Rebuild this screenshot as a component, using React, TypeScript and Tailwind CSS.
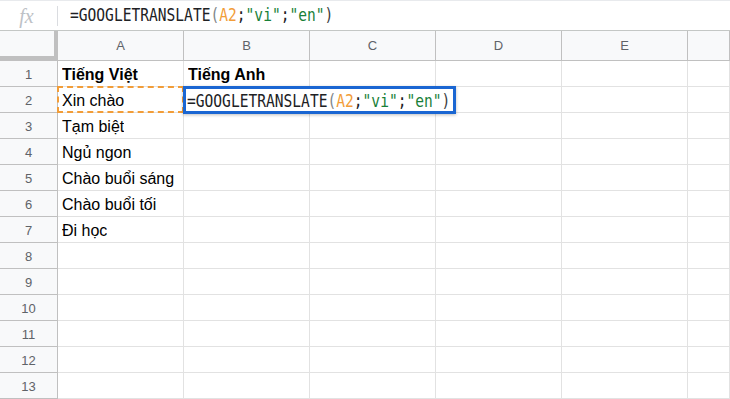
import React from 'react';

const COLS = ['A', 'B', 'C', 'D', 'E', ''];
const COL_W = ['w-[126px]', 'w-[126px]', 'w-[126px]', 'w-[126px]', 'w-[126px]', 'flex-1'];

const DATA: Record<number, [string, string]> = {
	1: ['Tiếng Việt', 'Tiếng Anh'],
	2: ['Xin chào', ''],
	3: ['Tạm biệt', ''],
	4: ['Ngủ ngon', ''],
	5: ['Chào buổi sáng', ''],
	6: ['Chào buổi tối', ''],
	7: ['Đi học', ''],
};

function Formula() {
	return (
		<span className="inline-block origin-left scale-x-[0.81] whitespace-nowrap font-['DejaVu_Sans_Mono',monospace] text-[18px] font-light leading-none">
			<span className="text-[#202124]">=GOOGLETRANSLATE</span>
			<span className="text-[#80868b]">(</span>
			<span className="text-[#f29d38]">A2</span>
			<span className="text-[#202124]">;</span>
			<span className="text-[#188038]">"vi"</span>
			<span className="text-[#202124]">;</span>
			<span className="text-[#188038]">"en"</span>
			<span className="text-[#3c4043]">)</span>
		</span>
	);
}

export default function App() {
	const rows = Array.from({ length: 13 }, (_, i) => i + 1);
	return (
		<div className="h-[399px] w-[730px] overflow-hidden bg-white font-['Liberation_Sans',Arial,sans-serif]">
			{/* formula bar */}
			<div className="flex h-[31px] items-center border-t border-b border-t-[#e8eaed] border-b-[#c4c7c5] bg-white">
				<div className="flex w-[57px] items-center justify-center pr-1">
					<span className="font-['Liberation_Serif',serif] text-[20px] italic leading-none text-[#bdc1c6]">fx</span>
				</div>
				<div className="h-[20px] w-px bg-[#dadce0]" />
				<div className="pl-[12px] pt-[1px]">
					<Formula />
				</div>
			</div>

			{/* column headers */}
			<div className="flex h-[30px] border-b border-[#c0c0c0] bg-[#f8f9fa]">
				<div className="w-[58px] shrink-0 border-r-[4px] border-b-[4px] border-[#c0c0c0] bg-[#f8f9fa]" />
				{COLS.map((c, i) => (
					<div
						key={i}
						className={`${COL_W[i]} shrink-0 flex items-center justify-center border-r border-[#c0c0c0] pt-[1px] text-[13px] text-[#5f6368]`}
					>
						{c}
					</div>
				))}
			</div>

			{/* rows */}
			{rows.map((r) => {
				const d = DATA[r];
				return (
					<div key={r} className="flex h-[26px]">
						<div className="flex w-[58px] shrink-0 items-center justify-center border-r border-b border-[#c0c0c0] bg-[#f8f9fa] pt-[3px] text-[13px] text-[#5f6368]">
							{r}
						</div>
						{COLS.map((_, ci) => {
							const text = d && ci < 2 ? d[ci] : '';
							const bold = r === 1;
							return (
								<div
									key={ci}
									className={`${COL_W[ci]} shrink-0 relative flex items-center border-r border-b border-[#e2e2e2] px-[4px] pt-[3px] text-[16px] text-black ${bold ? 'font-bold' : ''}`}
								>
									<span className="truncate">{text}</span>
									{r === 2 && ci === 0 ? (
										<div className="absolute -top-px -left-px -right-px -bottom-px border-2 border-dashed border-[#f29d38]" />
									) : null}
									{r === 2 && ci === 1 ? (
										<div className="absolute -top-[1px] -left-[1px] z-10 flex h-[28px] w-[273px] items-center border-[3px] border-[#1a66d2] bg-white pl-[1px] pt-[1px] shadow-[0_1px_3px_rgba(0,0,0,0.25)]">
											<Formula />
										</div>
									) : null}
								</div>
							);
						})}
					</div>
				);
			})}
		</div>
	);
}
